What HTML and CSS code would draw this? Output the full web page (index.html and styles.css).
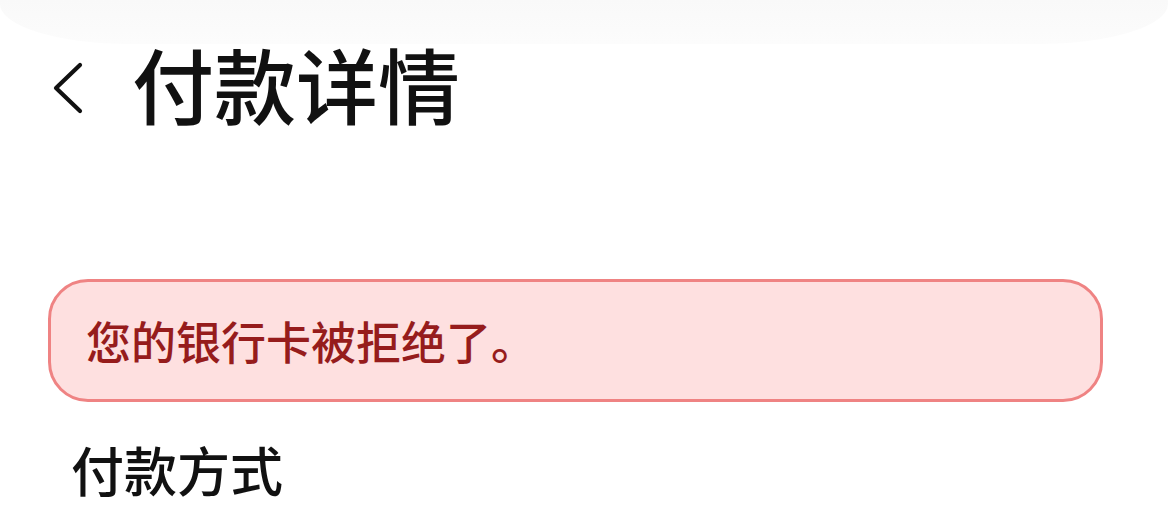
FILE: index.html
```html
<!DOCTYPE html>
<html lang="zh-CN">
<head>
<meta charset="utf-8">
<title>付款详情</title>
<link rel="stylesheet" href="styles.css">
</head>
<body>
<div class="topbar"></div>
<header class="header">
  <svg class="back" viewBox="0 0 32 52" width="32" height="52" aria-hidden="true">
    <polyline points="27,3 3,26 27,49" fill="none" stroke="#111" stroke-width="4.2" stroke-linecap="round" stroke-linejoin="round"/>
  </svg>
  <h1 class="title">付款详情</h1>
</header>
<div class="alert">您的银行卡被拒绝了。</div>
<h2 class="section-title">付款方式</h2>
</body>
</html>
```
FILE: styles.css
```css
html, body {
  margin: 0;
  padding: 0;
  background: #ffffff;
}
body {
  font-family: "Noto Sans CJK SC", "Noto Sans", sans-serif;
  color: #111111;
  width: 1168px;
  height: 532px;
  overflow: hidden;
}
.topbar {
  height: 44px;
  background: linear-gradient(#f9f9f9, #fcfcfc);
  border-radius: 0 0 130px 130px / 0 0 40px 40px;
}
.header {
  height: 86px;
  display: flex;
  align-items: center;
  padding-left: 53px;
}
.back {
  flex: none;
  display: block;
  margin-top: 1px;
}
.title {
  margin: 0 0 8px 47px;
  font-size: 82px;
  font-weight: 500;
  line-height: 1;
  color: #111111;
}
.alert {
  margin: 149px 65px 0 48px;
  height: 123px;
  box-sizing: border-box;
  border: 3px solid #ef8383;
  border-radius: 40px;
  background: #fee0e0;
  color: #961c1c;
  font-size: 45px;
  font-weight: 500;
  display: flex;
  align-items: center;
  padding-left: 35px;
  line-height: 1;
}
.section-title {
  margin: 41px 0 0 71px;
  font-size: 53px;
  font-weight: 500;
  line-height: 1;
  color: #111111;
}
```
